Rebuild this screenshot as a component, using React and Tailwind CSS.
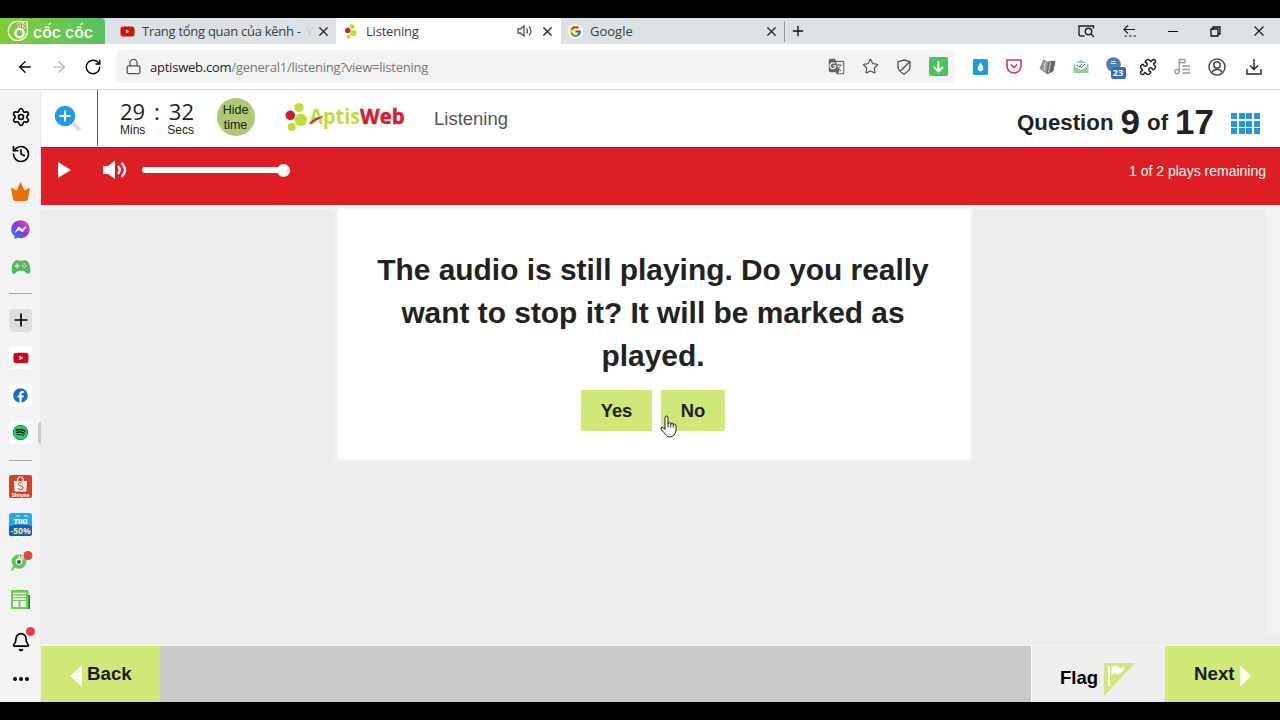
import { ArrowLeft, ArrowRight, Bell, History, Lock, Plus, Puzzle, RotateCw, Settings, Star, X } from 'lucide-react'
import { FaFacebook, FaSpotify, FaFacebookMessenger, FaYoutube } from 'react-icons/fa'
import { FcGoogle } from 'react-icons/fc'
import { IoGameController } from 'react-icons/io5'
import { MdGTranslate } from 'react-icons/md'

function CocCocLogo() {
  return (
    <svg width="105" height="26" viewBox="0 0 105 26">
      <path d="M24 5.500 A9.600 9.600 0 1 0 27.300 11 V3.500 H19" fill="none" stroke="#fff" strokeWidth="1.2" />
      <circle cx="19.5" cy="15.2" r="4.2" fill="none" stroke="#fff" strokeWidth="2.4" />
      <path d="M19.400 9 L18.300 5 M21.400 8.700 L22.300 4.800 M23.300 10 L26 6.300" stroke="#fff" strokeWidth="2.400" />
      <path d="M19.400 8.700 L18.500 5.300 M21.400 8.500 L22.200 5 M23.500 9.500 L25.800 6.500" stroke="#e2433c" strokeWidth="1.200" />
      <text x="33" y="20" textLength="60" lengthAdjust="spacingAndGlyphs" fontFamily="Inter, sans-serif" fontWeight="600" fontSize="15" fill="#fff">cốc cốc</text>
    </svg>
  )
}

function AptisDots() {
  return (
    <svg width="12" height="15" viewBox="0 0 22 28">
      <circle cx="5" cy="12" r="5" fill="#cf1f2e" />
      <circle cx="13.5" cy="5" r="4.6" fill="#bfdc35" />
      <circle cx="15.5" cy="17" r="6" fill="#bfdc35" />
      <circle cx="6.5" cy="23.5" r="4" fill="#bfdc35" />
    </svg>
  )
}

function AptisLogo() {
  return (
    <svg width="122" height="36" viewBox="0 0 122 36">
      <circle cx="5.3" cy="13.3" r="4.8" fill="#cc1e2d" />
      <circle cx="14" cy="5.5" r="4.6" fill="#c0dd36" />
      <circle cx="15.8" cy="17.8" r="6.2" fill="#c0dd36" />
      <circle cx="6.7" cy="24.7" r="4" fill="#c0dd36" />
      <text x="24.5" y="21.5" textLength="50.5" lengthAdjust="spacingAndGlyphs" fontFamily='"Open Sans", sans-serif' fontWeight="700" fontSize="21" fill="#c0dd36">Aptis</text>
      <text x="75" y="21.5" textLength="44.5" lengthAdjust="spacingAndGlyphs" fontFamily='"Open Sans", sans-serif' fontWeight="700" fontSize="21" fill="#cf2130" stroke="#cf2130" strokeWidth=".5">Web</text>
      <path d="M24.500 21.500 Q29.500 15.500 38 14.500 Q32 17.500 28 20.500 Q26.500 22 24.500 21.500 Z" fill="#cf2130" stroke="#cf2130" strokeWidth=".6" />
    </svg>
  )
}

function Slot({ children, className = 'w-[34px]' }) {
  return <div className={`flex h-full shrink-0 items-center justify-center ${className}`}>{children}</div>
}

function TabStrip() {
  return (
    <div className="flex h-[26px] bg-[#dce1e5] font-['Open_Sans',sans-serif] text-[13px] text-[#3c4043]">
      <div className="w-[105px] shrink-0 overflow-hidden rounded-tr bg-linear-to-r from-[#83cb35] to-[#55c261]">
        <CocCocLogo />
      </div>
      <div className="flex w-[231px] items-center pl-[15px]">
        <FaYoutube size={15} color="#d60f14" />
        <span className="ml-[7px] w-[164px] whitespace-nowrap pt-px tracking-[-0.280px]">Trang tổng quan của kênh -</span>
        <span className="w-[8px] pt-px text-[#cbd0d4]">Y</span>
        <X size={15} className="ml-[2px] shrink-0 text-[#222]" />
      </div>
      <div className="flex w-[225px] items-center rounded-t bg-white pl-[9px]">
        <AptisDots />
        <span className="ml-[9px] flex-1 pt-px tracking-[-0.2px]">Listening</span>
        <svg width="16" height="14" viewBox="0 0 16 14" fill="none" stroke="#555" strokeWidth="1.3">
          <path d="M1 5 V9 H3.5 L7 12 V2 L3.5 5 Z M9.500 4.5 Q11.500 7 9.500 9.5 M12 2.500 Q16 7 12 11.500" />
        </svg>
        <X size={15} className="ml-[7px] mr-[6px] text-[#222]" />
      </div>
      <div className="flex w-[224px] items-center border-r border-[#a9adb1] pl-[7px] [border-image:linear-gradient(to_bottom,transparent_15%,#94999d_15%,#94999d_90%,transparent_90%)_1]">
        <span className="flex size-[15px] items-center justify-center rounded-full bg-white"><FcGoogle size={13} /></span>
        <span className="ml-[7px] flex-1 pt-px">Google</span>
        <X size={15} className="mr-[5px] text-[#222]" />
      </div>
      <Plus size={16} className="ml-[5px] mt-[5px] text-[#111]" />
      <div className="flex-1" />
      <Slot className="w-[43px]">
        <svg width="17" height="13" viewBox="0 0 17 13" fill="none" stroke="#222" strokeWidth="1.4">
          <path d="M6.5 11 H3 Q1 11 1 9 V1 H15.5 V3.5" />
          <circle cx="10.5" cy="6.5" r="3.2" />
          <path d="M13 9 L16 12" />
        </svg>
      </Slot>
      <Slot className="w-[43px]">
        <svg width="14" height="12" viewBox="0 0 14 12" fill="none" stroke="#222" strokeWidth="1.2">
          <path d="M12 4.5 H1 M5 .5 L1 4.5 L5 8.5" />
          <path d="M1.5 11 H13" strokeDasharray="2.5 2" />
        </svg>
      </Slot>
      <Slot className="w-[43px]">
        <div className="h-px w-[10px] bg-[#111]" />
      </Slot>
      <Slot className="w-[43px]">
        <svg width="11" height="11" viewBox="0 0 11 11" fill="none" stroke="#111" strokeWidth="1.3">
          <path d="M1 3 H8 V10 H1 Z M3 3 V1 H10 V8 H8" />
        </svg>
      </Slot>
      <Slot className="w-[43px]">
        <svg width="10" height="10" viewBox="0 0 10 10" stroke="#111" strokeWidth="1.1"><path d="M.5 .5 L9.5 9.5 M9.5 .5 L.5 9.5" /></svg>
      </Slot>
    </div>
  )
}

function Toolbar() {
  return (
    <div className="flex h-[46px] items-center border-b border-[#dcdcdc] bg-white">
      <Slot className="ml-2 w-[34px]"><ArrowLeft size={18} strokeWidth={1.7} /></Slot>
      <Slot><ArrowRight size={18} strokeWidth={1.5} color="#aaa" /></Slot>
      <Slot><RotateCw size={18} strokeWidth={1.8} /></Slot>
      <div className="ml-[6px] flex h-[33px] w-[839px] items-center rounded bg-[#f3f3f3]">
        <Slot><Lock size={17} strokeWidth={1.8} color="#555" /></Slot>
        <span className="flex-1 whitespace-nowrap pt-[2px] font-['Open_Sans',sans-serif] text-[13px] tracking-[-0.230px] text-[#777]">
          <span className="text-[#222]">aptisweb.com</span>/general1/listening?view=listening
        </span>
        <Slot><MdGTranslate size={17} color="#666" /></Slot>
        <Slot><Star size={17} strokeWidth={1.7} color="#555" /></Slot>
        <Slot>
          <svg width="14" height="16" viewBox="0 0 14 16" fill="none" stroke="#555" strokeWidth="1.4">
            <path d="M7 1 L13 2.8 V8 Q12.5 12.5 7 15 Q1.500 12.5 1 8 V2.800 Z M12 3.500 L3 12.500" />
          </svg>
        </Slot>
        <Slot>
          <svg width="19" height="19" viewBox="0 0 19 19">
            <rect width="19" height="19" rx="2" fill="#4cc35c" />
            <path d="M9.500 4 V14 M5 10 L9.500 14.500 L14 10" fill="none" stroke="#fff" strokeWidth="1.8" />
          </svg>
        </Slot>
      </div>
      <Slot className="ml-2 w-[34px]">
        <svg width="15" height="16" viewBox="0 0 15 16">
          <rect width="15" height="16" rx="1.5" fill="#1b9be2" />
          <path d="M7.500 3.500 Q13 11 7.500 12.500 Q2 11 7.500 3.500" fill="#fff" />
        </svg>
      </Slot>
      <Slot>
        <svg width="16" height="15" viewBox="0 0 16 15" fill="none" stroke="#d0355b" strokeWidth="1.6" strokeLinejoin="round">
          <path d="M1 1 H15 V7 A7 7 0 0 1 1 7 Z M4.800 5.500 L8 8.500 L11.200 5.500" />
        </svg>
      </Slot>
      <Slot className="w-[33px]">
        <svg width="17" height="16" viewBox="0 0 17 16">
          <path d="M4.500 1 L8.500 3 L7.500 14 L1 9.500 Z" fill="#999" stroke="#888" />
          <path d="M9.500 3 L16 2 L14 12 L8 15 Z" fill="#666" stroke="#666" />
          <path d="M6.500 3 L5 11 M11.500 3.500 L9.500 13.500" stroke="#ddd" />
        </svg>
      </Slot>
      <Slot>
        <svg width="16" height="15" viewBox="0 0 16 15">
          <path d="M.5 5 L8 1 L15.500 5 V14 H.5 Z" fill="#8fd28f" />
          <path d="M2 4 H14 V8 L8 11 L2 8 Z" fill="#fff" />
          <path d="M4 6 L6 8 L9 5 M7 7.500 L8.500 8.500 L12 5" fill="none" stroke="#466baf" />
        </svg>
      </Slot>
      <Slot className="w-[35px]">
        <div className="relative size-[20px]">
          <svg width="15" height="15" viewBox="0 0 15 15">
            <circle cx="7.500" cy="7.500" r="7.300" fill="#4c7dae" />
            <path d="M4.500 6.500 H10 M5 4.500 H9.500" fill="none" stroke="#dce7ef" />
          </svg>
          <span className="absolute left-[5px] top-[10px] flex h-[12px] w-[15px] items-center justify-center rounded-xs bg-[#326cd1] font-['Open_Sans',sans-serif] text-[9px] font-bold leading-none text-white">23</span>
        </div>
      </Slot>
      <Slot className="w-[30px]"><Puzzle size={18} strokeWidth={2} color="#222" /></Slot>
      <Slot className="w-[38px]">
        <svg width="17" height="17" viewBox="0 0 17 17" fill="none" stroke="#999" strokeWidth="1.3">
          <circle cx="3" cy="13.500" r="2.200" />
          <path d="M5.200 13.500 V1.500 H11 V4.500 H5.500 M8.500 8 H16 M8.500 11.500 H16 M8.500 15 H16" />
        </svg>
      </Slot>
      <Slot className="w-[32px]">
        <svg width="18" height="18" viewBox="0 0 18 18" fill="none" stroke="#444a5a" strokeWidth="1.5">
          <circle cx="9" cy="9" r="8" />
          <circle cx="9" cy="7" r="3.200" />
          <path d="M3.800 14.500 Q5 11.500 9 11.500 Q13 11.500 14.200 14.500" />
        </svg>
      </Slot>
      <Slot className="w-[42px]">
        <svg width="16" height="16" viewBox="0 0 16 16" fill="none" stroke="#222" strokeWidth="1.4">
          <path d="M8 0 V10 M4 6.500 L8 10.500 L12 6.500 M1 10 V15 H15 V10" />
        </svg>
      </Slot>
    </div>
  )
}

function SideItem({ children }) {
  return <div className="flex h-[37.5px] w-full items-center justify-center">{children}</div>
}

function Sidebar() {
  const tile = 'flex size-[23px] items-center justify-center rounded bg-white'

  return (
    <div className="flex w-[41px] shrink-0 flex-col items-center border-r border-[#eaeaea] bg-[#f3f3f3] pl-px pt-2">
      <SideItem><Settings size={20} strokeWidth={2} /></SideItem>
      <SideItem><History size={20} strokeWidth={2} /></SideItem>
      <SideItem>
        <svg width="19" height="19" viewBox="0 0 19 19">
          <path d="M0 5.500 L5.500 8.500 L9.500 0 L13.500 8.500 L19 5.500 L17 17 Q16.500 19 15 19 H4 Q2.500 19 2 17 Z" fill="#ed6b06" />
        </svg>
      </SideItem>
      <SideItem>
        <svg width="0" height="0" className="absolute">
          <linearGradient id="messenger" x1="0" y1="1" x2="1" y2="0">
            <stop offset="0" stopColor="#1b83ff" />
            <stop offset="0.5" stopColor="#8b35e5" />
            <stop offset="1" stopColor="#f35a87" />
          </linearGradient>
        </svg>
        <FaFacebookMessenger size={19} style={{ fill: 'url(#messenger)' }} />
      </SideItem>
      <SideItem><IoGameController size={20} color="#5cb661" /></SideItem>
      <div className="mt-[7px] mb-[8px] h-px w-[23px] shrink-0 bg-[#aaa]" />
      <SideItem><span className="flex size-[23px] items-center justify-center rounded bg-[#dedede]"><Plus size={20} strokeWidth={2} /></span></SideItem>
      <SideItem><span className={tile}><FaYoutube size={16} color="#cd0613" /></span></SideItem>
      <SideItem><span className={tile}><FaFacebook size={15} color="#1b6dc9" /></span></SideItem>
      <div className="relative flex h-[37.5px] w-full items-center justify-center">
        <span className={tile}><FaSpotify size={15} color="#20ce61" className="rounded-full bg-[#111]" /></span>
        <span className="absolute -right-px h-[22px] w-[3px] rounded-l bg-[#c9c9c9]" />
      </div>
      <div className="my-[8px] h-px w-[23px] shrink-0 bg-[#aaa]" />
      <SideItem>
        <svg width="23" height="23" viewBox="0 0 23 23" className="-mt-px">
          <rect width="23" height="23" rx="2" fill="#d4402a" />
          <path d="M5 6 H18 L17.300 16.500 H5.700 Z" fill="#fff" />
          <path d="M8.500 6 Q8.500 2 11.500 2 Q14.500 2 14.500 6" fill="none" stroke="#fff" strokeWidth="1.2" />
          <text x="11.500" y="15" textAnchor="middle" fontFamily="Liberation Sans" fontSize="10" fill="#d4402a">S</text>
          <text x="11.500" y="21.500" textAnchor="middle" fontFamily="Liberation Sans" fontWeight="700" fontSize="5" fill="#fff">Shopee</text>
        </svg>
      </SideItem>
      <SideItem>
        <svg width="23" height="23" viewBox="0 0 23 23">
          <rect width="23" height="23" rx="2.500" fill="#26a8ec" />
          <path d="M0 13 Q12 10 23 13 V20.500 Q23 23 20.500 23 H2.500 Q0 23 0 20.500 Z" fill="#155cc4" />
          <path d="M7 3.500 Q9 1.500 11 3.500 M15 3.500 Q17 1.500 19 3.500" fill="none" stroke="#fff" strokeWidth=".8" />
          <text x="11.500" y="10.500" textLength="14" textAnchor="middle" fontFamily="Open Sans" fontWeight="800" fontSize="7.500" fill="#fff">TIKI</text>
          <text x="11.500" y="21" textLength="20" lengthAdjust="spacingAndGlyphs" textAnchor="middle" fontFamily="Open Sans" fontWeight="700" fontSize="8.500" fill="#f9f17a">-50%</text>
        </svg>
      </SideItem>
      <SideItem>
        <svg width="24" height="24" viewBox="0 0 24 24" className="overflow-visible">
          <path d="M6 15 L2.500 20.500" stroke="#69c25b" strokeWidth="2" />
          <circle cx="10" cy="11.500" r="5.300" fill="#fff" stroke="#63c558" strokeWidth="4" />
          <path d="M11 8 L11 3 M13 9 L16 6" stroke="#fff" strokeWidth="2.500" />
          <path d="M11.500 7.500 L11 4 M13.500 9 L16 6.500" stroke="#777" strokeWidth="1" />
          <circle cx="10" cy="12" r="2" fill="#555" />
          <circle cx="19" cy="5.500" r="4.500" fill="#dc4b31" />
        </svg>
      </SideItem>
      <SideItem>
        <svg width="19" height="19" viewBox="0 0 19 19">
          <path d="M17 5 H19 V19 H15 Z" fill="#237c36" />
          <rect width="17.500" height="19" rx="1" fill="#6cc951" />
          <path d="M2 3.500 H15 M2 6.300 H15 M2 9 H15" stroke="#fff" strokeWidth="1.300" />
          <path d="M2 11 H7.500 V17 H2 Z M9.500 11 H15 V17 H9.500 Z" fill="#fff" />
        </svg>
      </SideItem>
      <div className="relative mt-1 flex h-[37.5px] w-full shrink-0 items-center justify-center">
        <Bell size={20} strokeWidth={2} className="mt-px" />
        <span className="absolute right-[5px] top-[4px] size-[9px] rounded-full bg-[#e23e57]" />
      </div>
      <div className="flex h-[38px] items-center gap-[2px]">
        <span className="size-[4px] rounded-full bg-black" />
        <span className="size-[4px] rounded-full bg-black" />
        <span className="size-[4px] rounded-full bg-black" />
      </div>
    </div>
  )
}

function TestHeader() {
  return (
    <div className="flex h-[57px] bg-white text-[#222]">
      <div className="flex h-[56px] w-[56.500px] items-center border-r border-[#606060] pl-[13px]">
        <svg width="28" height="28" viewBox="0 0 28 28" className="-mt-px">
          <path d="M19 19 L26 26" stroke="#dcdcdc" strokeWidth="4" />
          <circle cx="11" cy="12" r="10.300" fill="#219be6" />
          <path d="M11 6.500 V17.500 M5.500 12 H16.500" stroke="#fff" strokeWidth="1.900" />
        </svg>
      </div>
      <div className="ml-[22.500px] w-[74px] pt-[8px]">
        <div className="flex h-[25px] items-center justify-between font-['Open_Sans',sans-serif] text-[22px] leading-none">
          <span>29</span><span>:</span><span>32</span>
        </div>
        <div className="flex justify-between text-xs leading-[14px]">
          <span>Mins</span><span>Secs</span>
        </div>
      </div>
      <div className="ml-[22.500px] mt-[8px] flex size-[38px] shrink-0 items-center justify-center rounded-full bg-[#afc974] pt-[2px] text-center text-[12.500px] leading-[15px]">
        Hide<br />time
      </div>
      <div className="ml-[30px] mt-[12px]"><AptisLogo /></div>
      <div className="ml-[27.500px] flex-1 pt-[15px] text-[18.500px] leading-[27px] text-[#555]">Listening</div>
      <div className="flex h-[40px] items-center gap-[7px] pt-[24px] text-[22.300px] font-bold leading-[40px]">
        <span className="mt-[2px]">Question</span>
        <span className="text-[35px]">9</span>
        <span className="mt-[2px]">of</span>
        <span className="text-[35px]">17</span>
      </div>
      <div className="ml-[17px] mr-[20px] mt-[23px] grid h-[21px] w-[29px] grid-cols-4 gap-[1.500px]">
        {Array.from({ length: 12 }, (_, i) => <span key={i} className="bg-[#2596da]" />)}
      </div>
    </div>
  )
}

function PlayerBar() {
  return (
    <div className="relative z-10 flex h-[58px] border-t border-[#b5121b] bg-[#dd1e25] pt-[13px] text-white">
      <svg width="14" height="18" viewBox="0 0 14 18" className="ml-[16px]"><path d="M1 1 L14 9 L1 17 Z" fill="#fff" /></svg>
      <svg width="26" height="20" viewBox="0 0 26 20" className="ml-[32px] -mt-px">
        <path d="M0 6 H5 L12 0.500 V19 L5 14 H0 Z" fill="#fff" />
        <path d="M15 6 Q18.500 10 15 14 M18.500 3 Q25.500 10 18.500 17" fill="none" stroke="#fff" strokeWidth="2.200" />
      </svg>
      <div className="ml-[13px] flex h-[18px] w-[148px] items-center">
        <div className="h-[6px] flex-1 rounded-l-full bg-white" />
        <div className="-ml-1 size-[13px] rounded-full bg-white" />
      </div>
      <div className="flex-1 pr-[14px] text-right text-[14px] leading-[20px]">1 of 2 plays remaining</div>
    </div>
  )
}

function HandCursor() {
  return (
    <svg width="17" height="23" viewBox="0 0 17 23" className="absolute -left-px top-[25px]">
      <path
        d="M5 13 V3 Q5 1 6.500 1 Q8 1 8 3 V9 Q8 7.500 9.300 7.500 Q10.700 7.500 10.700 9.500 Q10.700 8 12 8 Q13.300 8 13.300 10 Q13.500 9 14.500 9 Q16 9 16 11 V15 Q16 18 14 20 Q12 22 10 22 Q7.500 22 6.500 20.500 L1.300 14.500 Q.5 12.500 2 12 Q3 12 5 14.500 Z"
        fill="#fff" stroke="#222" strokeWidth="1" strokeLinejoin="round"
      />
      <path d="M8 9 V12.500 M10.700 9 V12.500 M13.300 10 V12.500" stroke="#222" />
    </svg>
  )
}

function ConfirmDialog() {
  return (
    <div className="ml-[297px] h-[250px] w-[632px] bg-white px-[29px] pr-[31px] pt-[39px] text-center text-[#222] shadow-[0_0_5px_2px_#f8f8f3]">
      <h2 className="text-[29.900px] font-bold leading-[43px]">
        The audio is still playing. Do you really<br />want to stop it? It will be marked as<br />played.
      </h2>
      <div className="mt-[13px] flex justify-center gap-[9px] text-[18.400px] font-bold">
        <button className="h-[41px] w-[71px] bg-[#cfe877]">Yes</button>
        <button className="relative h-[41px] w-[64px] bg-[#cfe877]">
          No
          <HandCursor />
        </button>
      </div>
    </div>
  )
}

function BottomBar() {
  return (
    <div className="flex h-[57px] border-t border-[#f5f5f5] bg-[#cacaca] text-[18.700px] font-bold text-[#1c1c1c]">
      <div className="flex w-[119px] items-center bg-[#cfe877] pl-[29px]">
        <svg width="12" height="22" viewBox="0 0 12 22" className="mt-[4px]"><path d="M12 0 V22 L0 11 Z" fill="#fbfdf0" /></svg>
        <span className="ml-[5px]">Back</span>
      </div>
      <div className="flex-1" />
      <div className="flex w-[134px] border-l border-white bg-[#eee] pl-[28px] text-[18.500px] text-black">
        <span className="pt-[18px]">Flag</span>
        <svg width="31" height="33" viewBox="0 0 31 33" className="ml-[6px] mt-[17px]">
          <path d="M0 0 H31 L0 33 Z" fill="#cfe877" />
          <path d="M5 3 V23" stroke="#fff" strokeWidth="2" />
          <path d="M7.500 4 Q11 1.500 14 4 Q17 6 21 4 Q18 11 14 11 Q10 9 7.500 12 Z" fill="#fff" />
        </svg>
      </div>
      <div className="flex w-[115px] items-center bg-[#cfe877] pl-[29px]">
        <span>Next</span>
        <svg width="11" height="22" viewBox="0 0 11 22" className="ml-[5px] mt-[3px]"><path d="M0 0 V22 L11 11 Z" fill="#fbfdf0" /></svg>
      </div>
    </div>
  )
}

export default function App() {
  return (
    <div className="flex h-[720px] w-[1280px] flex-col overflow-hidden bg-black py-[18px] font-['Liberation_Sans',Arial,sans-serif]">
      <TabStrip />
      <Toolbar />
      <div className="flex min-h-0 flex-1">
        <Sidebar />
        <div className="flex min-w-0 flex-1 flex-col">
          <TestHeader />
          <PlayerBar />
          <div className="flex flex-1 items-start justify-between border-t-4 border-[#f3f3f3] bg-[#ececec]">
            <ConfirmDialog />
            <div className="h-[424px] w-[15px] bg-[#f2f2f2]" />
          </div>
          <BottomBar />
        </div>
      </div>
    </div>
  )
}
